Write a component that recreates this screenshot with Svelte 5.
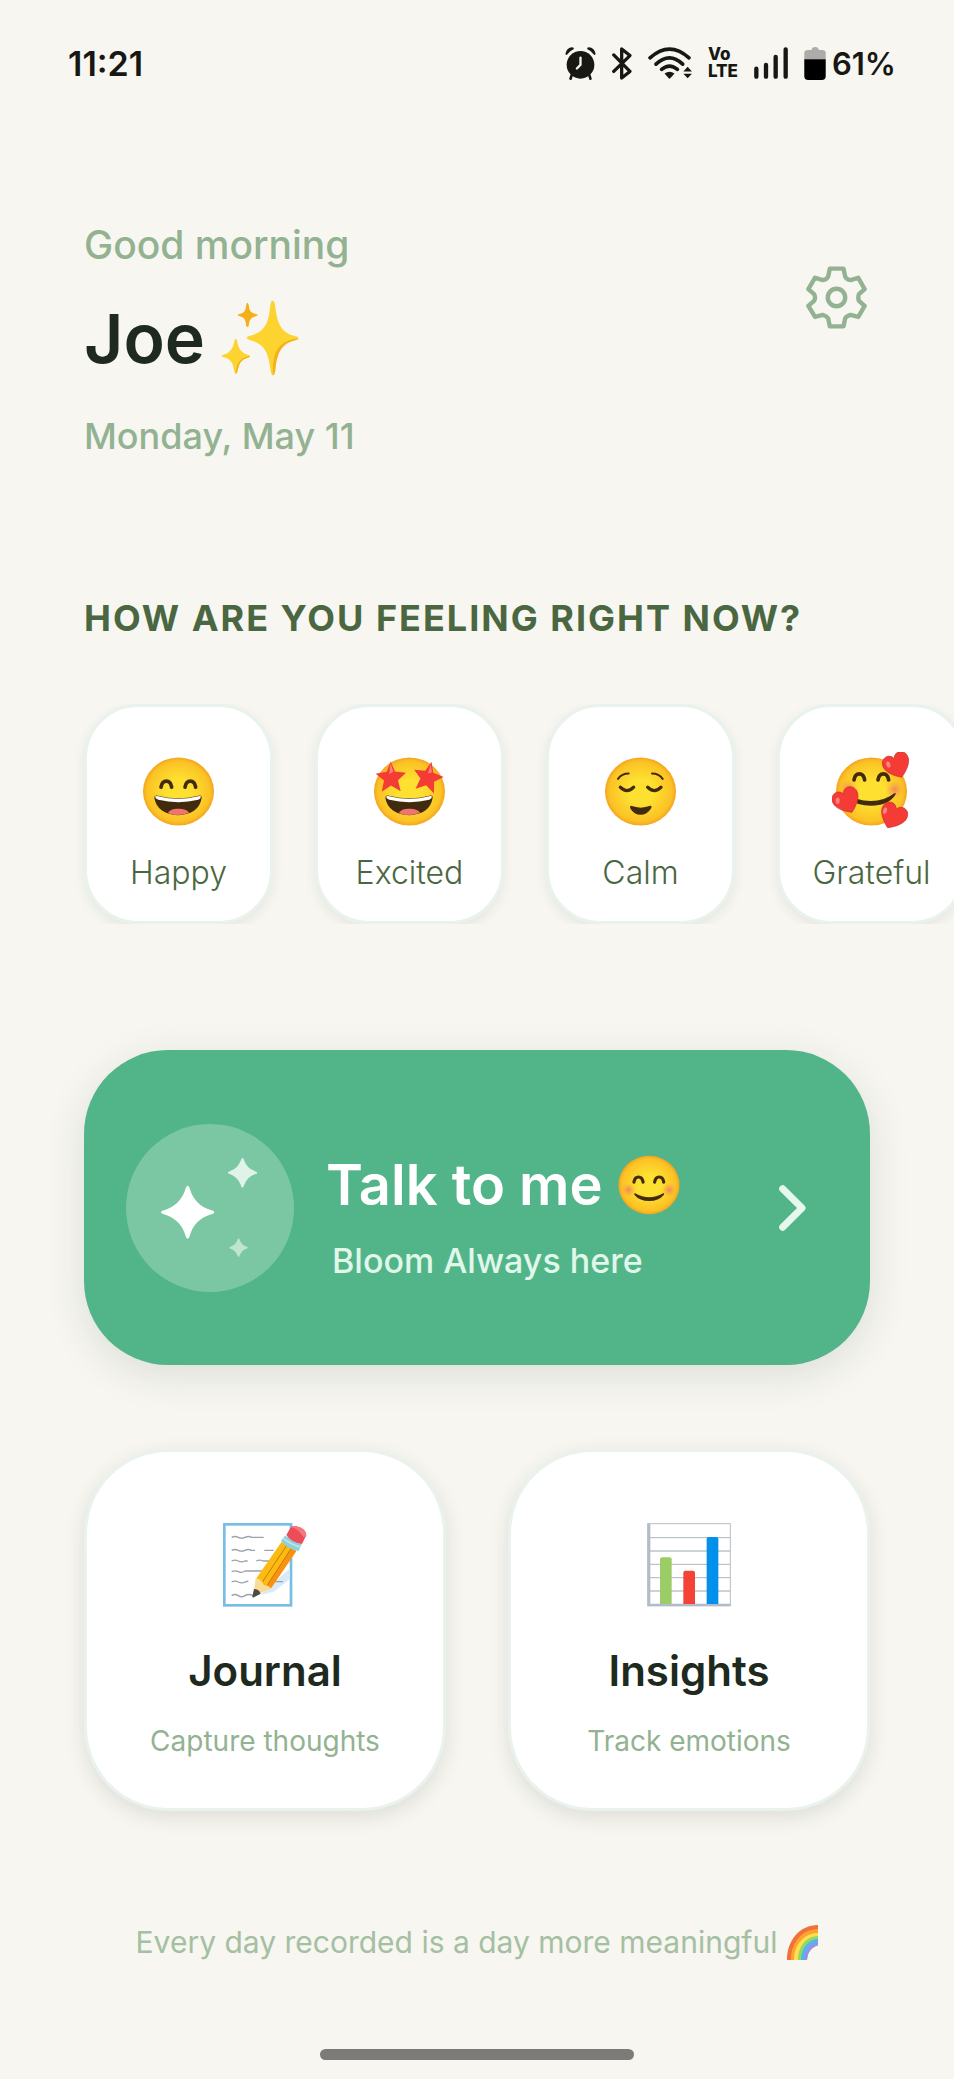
<script>
  const moods = [
    { name: 'Happy', face: 'happy' },
    { name: 'Excited', face: 'excited' },
    { name: 'Calm', face: 'calm' },
    { name: 'Grateful', face: 'grateful' }
  ]
  const star = 'M0 -46 L13 -16 L46 -12 L22 10 L30 43 L1 26 L-27 45 L-20 11 L-45 -9 L-12 -15Z'
  const heart = 'M0 38 C-22 24 -40 6 -40 -12 C-40 -28 -29 -36 -19 -36 C-9 -36 -2 -29 0 -22 C2 -29 9 -36 19 -36 C29 -36 40 -28 40 -12 C40 6 22 24 0 38Z'
</script>

{#snippet openMouth()}
  <path d="M34 121 Q34 112 45 115 Q106 130 166 115 Q177 112 176 121 C172 153 145 173 105 173 C65 173 38 151 34 121Z" fill="#422b0d" />
  <path d="M36 118 Q38 114 46 116 Q106 131 166 116 Q173 114 174 118 Q173 124 166 127 Q106 141 46 127 Q37 124 36 118Z" fill="#fff" />
  <path d="M75 167 C80 150 130 150 138 166 Q106 179 75 167Z" fill="#ef7472" />
{/snippet}

{#snippet arcs(y)}
  <g fill="none" stroke="#422b0d" stroke-width="11" stroke-linecap="round">
    <path d="M0 20 C4 -4 28 -4 32 20" transform="translate(54 {y})" />
    <path d="M0 20 C4 -4 28 -4 32 20" transform="translate(126 {y})" />
  </g>
{/snippet}

{#snippet face(kind)}
  <svg class="face" viewBox="-12 -16 237 236" aria-hidden="true">
    <defs>
      <radialGradient id="skin-{kind}" cx="50%" cy="50%" r="52%">
        <stop offset="0.35" stop-color="#fde030" />
        <stop offset="0.85" stop-color="#fbc225" />
        <stop offset="1" stop-color="#f19a1c" />
      </radialGradient>
      <radialGradient id="cheek-{kind}">
        <stop offset="0" stop-color="#f2875a" />
        <stop offset="1" stop-color="#f9a84a" stop-opacity="0" />
      </radialGradient>
    </defs>
    <ellipse cx="106.5" cy="102" rx="106.5" ry="102" fill="url(#skin-{kind})" />
    {#if kind == 'happy'}
      {@render arcs(69)}
      {@render openMouth()}
    {:else if kind == 'excited'}
      {@render openMouth()}
      <path d={star} transform="translate(50 58)" fill="#f43b36" />
      <path d={star} transform="translate(163 58) scale(-1 1) rotate(-12)" fill="#f43b36" />
      <path d="M49 16 L58 42 L46 50Z M170 20 L174 44 L162 48Z" fill="#ff8078" />
    {:else if kind == 'calm'}
      <g fill="none" stroke="#422b0d" stroke-linecap="round">
        <path d="M39 64 Q50 48 71 48 M141 48 Q162 48 173 64" stroke-width="6" />
        <path d="M46 89 Q66 110 86 89 M128 89 Q148 110 168 89" stroke-width="10" />
      </g>
      <path d="M78 145 Q107 156 136 145 Q142 146 138 153 Q126 172 107 172 Q87 172 76 153 Q73 146 78 145Z" fill="#422b0d" />
    {:else if kind == 'grateful'}
      <circle cx="36" cy="94" r="28" fill="url(#cheek-{kind})" />
      <circle cx="176" cy="96" r="28" fill="url(#cheek-{kind})" />
      {@render arcs(47)}
      <path d="M62 124 C108 138 148 128 174 108 Q182 104 178 112 C160 143 112 152 64 139Z" fill="#422b0d" />
      <g fill="#f43b36" stroke="#d02a2c" stroke-width="2">
        <path d={heart} transform="translate(183 24) rotate(-22)" />
        <path d={heart} transform="translate(32 130) rotate(-25)" />
        <path d={heart} transform="translate(171 176) rotate(25)" />
      </g>
      <g fill="#ff827d">
        <ellipse cx="157" cy="21" rx="6" ry="10" transform="rotate(-15 157 21)" />
        <ellipse cx="5" cy="130" rx="6" ry="10" />
        <ellipse cx="147" cy="160" rx="6" ry="10" transform="rotate(15 147 160)" />
      </g>
    {:else}
      <circle cx="35" cy="119" r="25" fill="url(#cheek-{kind})" />
      <circle cx="177" cy="119" r="25" fill="url(#cheek-{kind})" />
      {@render arcs(72)}
      <path d="M58 131 Q107 158 156 131 Q162 129 158 137 Q140 158 107 158 Q74 158 56 137 Q53 130 58 131Z" fill="#422b0d" />
    {/if}
  </svg>
{/snippet}

<div class="screen">
  <div class="status">
    <span class="clock">11:21</span>
    <div class="tray">
      <svg width="31" height="33" viewBox="76 46 94 100" aria-hidden="true">
        <circle cx="123" cy="100" r="42" fill="#171714" />
        <path d="M96 132 L93 142 M150 132 L153 142" stroke="#171714" stroke-width="8" stroke-linecap="round" />
        <path d="M77 68 Q80 48 98 47 Q103 48 103 52 Q89 58 81 70Z M169 68 Q166 48 148 47 Q143 48 143 52 Q157 58 165 70Z" fill="#171714" />
        <path d="M123 78 V100 L112 111" fill="none" stroke="#f7f6f1" stroke-width="7" stroke-linecap="round" />
      </svg>
      <svg width="20" height="33" viewBox="218 46 60 100" aria-hidden="true">
        <path d="M223 70 L272 120 L247 140 V52 L272 72 L223 120" fill="none" stroke="#171714" stroke-width="10" stroke-linejoin="round" stroke-linecap="round" />
      </svg>
      <svg width="44" height="33" viewBox="321 46 133 100" aria-hidden="true">
        <g fill="none" stroke="#171714" stroke-width="11" stroke-linecap="round">
          <path d="M327 79 Q386 26 445 79" />
          <path d="M345 98 Q386 60 426 98" />
          <path d="M362 114 Q386 94 410 114" />
        </g>
        <path d="M371 126 Q386 116 401 126 Q386 144 385 142Z M428 120 L441 106 L454 120Z M428 127 L441 141 L454 127Z" fill="#171714" />
      </svg>
      <span class="volte">Vo<br />LTE</span>
      <svg class="bars" width="34" height="32" viewBox="642 50 102 94" aria-hidden="true">
        <path d="M649 114 V138 M678 103 V138 M707 79 V138 M737 56 V138" stroke="#171714" stroke-width="13" stroke-linecap="round" />
      </svg>
      <svg width="22" height="33" viewBox="795 44 65 100" aria-hidden="true">
        <path d="M795 82 V62 Q795 53 806 53 H817 Q818 44 828 44 Q838 44 839 53 H850 Q860 53 860 62 V82Z" fill="#adaca8" />
        <path d="M795 81 H860 V132 Q860 144 848 144 H807 Q795 144 795 132Z" fill="#000" />
      </svg>
      <span class="percent">61%</span>
    </div>
  </div>

  <main>
    <header>
      <div>
        <p class="greeting">Good morning</p>
        <h1>
          Joe
          <svg width="78" height="76" viewBox="466 274 233 227" aria-hidden="true">
            <g fill="#fdd32f">
              <path d="M620 276 Q626 276 628 292 C634 350 650 372 684 381 Q697 384 697 388 Q697 392 684 395 C650 405 634 425 628 484 Q626 499 621 499 Q616 499 614 484 C608 425 592 405 556 395 Q543 391 543 387 Q543 383 556 380 C592 370 608 350 613 292 Q615 276 620 276Z" />
              <path d="M510 390 Q514 391 515 402 Q520 430 543 437 Q553 439 553 442 Q553 445 543 447 Q521 453 516 482 Q514 494 510 494 Q507 494 505 482 Q500 452 478 446 Q468 443 468 441 Q468 438 478 436 Q499 430 505 402 Q507 391 510 390Z" />
            </g>
            <path d="M697 388 Q697 392 684 395 C650 405 634 425 628 484 Q626 499 621 499 C620 440 627 397 697 388Z M553 442 Q553 445 543 447 Q521 453 516 482 Q514 494 510 494 Q511 446 553 442Z" fill="#f3b21c" />
            <path d="M545 282 Q549 283 550 298 Q552 312 568 315 Q576 317 576 319 Q576 322 568 323 Q553 326 550 342 Q549 355 545 355 Q541 355 540 342 Q538 326 524 323 Q516 321 516 319 Q516 316 524 315 Q538 312 540 298 Q541 283 545 282Z" fill="#f4b01b" />
          </svg>
        </h1>
        <p class="date">Monday, May 11</p>
      </div>
      <button class="settings" aria-label="Settings">
        <svg width="61" height="63" viewBox="77 76 182 188" aria-hidden="true">
          <g fill="none" stroke="#92b291" stroke-width="13" stroke-linejoin="round">
            <path d="M148 84 H189 L194 108 Q198 117 210 118 L233 111 L252 145 L235 160 Q231 170 235 180 L252 195 L233 228 L210 222 Q198 225 194 232 L189 256 H148 L143 232 Q138 225 127 222 L104 228 L84 195 L101 180 Q107 170 101 160 L84 145 L104 111 L127 118 Q138 117 143 108Z" />
            <circle cx="168" cy="170" r="26" />
          </g>
        </svg>
      </button>
    </header>

    <h2>HOW ARE YOU FEELING RIGHT NOW?</h2>
    <div class="moods">
      {#each moods as mood}
        <button class="mood">
          {@render face(mood.face)}
          <span>{mood.name}</span>
        </button>
      {/each}
    </div>

    <button class="talk">
      <svg class="orb" viewBox="168 280 504 504" aria-hidden="true">
        <circle cx="420" cy="532" r="252" fill="#7bc7a3" />
        <path d="M353 465 Q357 465 359 473 C369 508 389 528 424 539 Q433 541 433 545 Q433 549 424 551 C389 562 369 582 359 616 Q357 624 353 624 Q349 624 347 616 C337 582 316 562 282 551 Q273 549 273 545 Q273 541 282 539 C316 528 337 508 347 473 Q349 465 353 465Z" fill="#fff" />
        <path d="M517 381 Q521 382 523 390 Q531 413 554 421 Q562 424 562 426 Q562 429 554 431 Q531 440 523 462 Q520 471 517 471 Q514 471 512 462 Q503 440 481 431 Q474 429 474 426 Q474 423 481 421 Q503 413 512 390 Q515 382 517 381Z" fill="#e0f3e9" />
        <path d="M506 622 Q508 623 509 628 Q515 643 529 648 Q534 650 534 651 Q534 652 529 654 Q515 659 509 674 Q508 679 506 679 Q504 679 502 674 Q497 659 482 654 Q477 652 477 651 Q477 650 482 648 Q497 643 502 628 Q504 623 506 622Z" fill="#bfe4d0" />
      </svg>
      <span class="talk-text">
        <span class="talk-title">Talk to me {@render face('smile')}</span>
        <span class="talk-sub">Bloom Always here</span>
      </span>
      <svg width="27" height="46" viewBox="894 463 81 138" aria-hidden="true">
        <path d="M905 474 L963 532 L905 590" fill="none" stroke="#e6f7ed" stroke-width="21" stroke-linecap="round" stroke-linejoin="round" />
      </svg>
    </button>

    <div class="tiles">
      <button class="tile">
        <svg width="84" height="84" viewBox="458 284 252 252" aria-hidden="true">
          <rect x="462" y="288" width="200" height="243" fill="#fff" stroke="#77bde4" stroke-width="8" />
          <path d="M659 420 V452 L610 490 L570 500Z" fill="#d8e9f8" />
          <path d="M484 327 q10 -5 20 0 t20 0 t20 0 h36 M484 366 q10 -5 20 0 t20 0 t20 0 h10 M582 366 h28 M484 398 q10 -5 20 0 t20 0 h8 M558 398 q10 -5 20 0 h20 M484 430 q10 -5 20 0 t20 -2 h60 M484 461 q10 -5 20 0 t20 0 l10 -3 M612 460 h26 M484 502 q10 -7 20 0 t20 0 t25 0" fill="none" stroke="#9aa3a9" stroke-width="4" />
          <path d="M634 340 L678 368 L602 480 L586 478 L577 468 L563 462 L558 450Z" fill="#fdbb12" />
          <path d="M664 359 L678 368 L602 480 L590 470Z" fill="#fb9110" />
          <path d="M650 350 L577 460 M664 358 L590 472" stroke="#c67a12" stroke-width="3" />
          <path d="M556 450 Q574 452 580 470 Q592 470 602 480 L566 497 L551 484Z" fill="#fbdc94" />
          <path d="M551 482 Q566 482 571 496 L548 508 Q545 506 547 500Z" fill="#4c4a4b" />
          <path d="M644 322 L694 347 L685 368 Q650 362 632 337Z" fill="#8fd0dc" />
          <path d="M639 330 Q660 348 690 356" fill="none" stroke="#bde6ec" stroke-width="5" />
          <path d="M648 320 L660 299 Q665 291 678 294 Q707 300 708 321 L695 347 Q661 341 648 320Z" fill="#ec4d56" />
          <path d="M663 297 Q682 300 699 326 Q707 326 708 320 Q706 300 678 294 Q668 291 663 297Z" fill="#f47780" />
        </svg>
        <span class="tile-title">Journal</span>
        <span class="tile-sub">Capture thoughts</span>
      </button>
      <button class="tile">
        <svg width="84" height="84" viewBox="471 276 252 252" aria-hidden="true">
          <rect x="473" y="278" width="248" height="246" fill="#fff" stroke="#b8bec5" stroke-width="3" />
          <path d="M480 320 H721 M480 360 H721 M480 400 H721 M480 440 H721 M480 480 H721" stroke="#bdc3c8" stroke-width="4" />
          <path d="M477 278 V522 H722" fill="none" stroke="#b0bccb" stroke-width="8" />
          <path d="M510 519 V385 Q510 379 516 379 H539 Q545 379 545 385 V519Z" fill="#9ccc65" />
          <path d="M580 519 V425 Q580 419 586 419 H609 Q615 419 615 425 V519Z" fill="#f44336" />
          <path d="M650 519 V323 Q650 318 656 318 H679 Q685 318 685 323 V519Z" fill="#0290ea" />
        </svg>
        <span class="tile-title">Insights</span>
        <span class="tile-sub">Track emotions</span>
      </button>
    </div>

    <p class="footnote">
      Every day recorded is a day more meaningful
      <svg width="31" height="35" viewBox="0 0 31 35" aria-hidden="true">
        <path d="M0 35 C0 15 13 0 31 0 V20 C25 22 20 27 20 35Z" fill="#f2703c" />
        <path d="M4 35 C4 18 15 4 31 4 V20 C25 22 20 27 20 35Z" fill="#fba431" />
        <path d="M7 35 C7 20 17 8 31 8 V20 C25 22 20 27 20 35Z" fill="#fde14b" />
        <path d="M11 35 C11 22 19 11 31 11 V20 C25 22 20 27 20 35Z" fill="#9ad36a" />
        <path d="M14 35 C14 24 21 14 31 14 V20 C25 22 20 27 20 35Z" fill="#45bfe0" />
        <path d="M17 35 C17 26 23 17 31 17 V20 C25 22 20 27 20 35Z" fill="#9a8cf5" />
      </svg>
    </p>
  </main>

  <div class="home-bar"></div>
</div>

<style>
  :global(body) {
    background: #f7f6f1;
  }

  .screen {
    min-height: 100vh;
    box-sizing: border-box;
    padding-bottom: 19px;
    display: flex;
    flex-direction: column;
    overflow: hidden;
    font-family: Inter, "Liberation Sans", sans-serif;
    color: #1e2a20;
  }

  .status {
    height: 126px;
    padding: 0 58px 0 68px;
    display: flex;
    align-items: center;
    justify-content: space-between;
    color: #171714;
    font-weight: 600;
  }

  .clock {
    font-size: 34px;
  }

  .tray {
    display: flex;
    align-items: center;
    gap: 16px;
  }

  .volte {
    font-size: 17px;
    line-height: 17px;
    font-weight: 800;
  }

  .percent {
    margin-left: -10px;
    font-size: 31px;
  }

  main {
    flex: 1;
    padding: 95px 84px 0;
  }

  header {
    display: flex;
    align-items: flex-start;
    justify-content: space-between;
    margin-bottom: 134px;
  }

  p, h1, h2 {
    margin: 0;
  }

  .greeting, .date {
    font-size: 39px;
    line-height: 48px;
    font-weight: 500;
    color: #92b291;
  }

  .date {
    font-size: 36px;
  }

  h1 {
    margin: 25px 0 30px;
    display: flex;
    align-items: center;
    gap: 16px;
    font-size: 68px;
    line-height: 88px;
    font-weight: 600;
  }

  button {
    font: inherit;
    color: inherit;
    border: 0;
    padding: 0;
    background: none;
    cursor: pointer;
  }

  svg {
    display: block;
    flex-shrink: 0;
  }

  .settings {
    margin-top: 45px;
    margin-right: 3px;
  }

  h2 {
    font-size: 36px;
    line-height: 48px;
    font-weight: 700;
    letter-spacing: 2px;
    white-space: nowrap;
    color: #4a6741;
  }

  .moods {
    margin: 62px -84px 126px -20px;
    padding-left: 20px;
    display: flex;
    gap: 42px;
    overflow: hidden;
  }

  .mood {
    flex: 0 0 189px;
    height: 220px;
    box-sizing: border-box;
    border: 3px solid #e9f2ec;
    border-radius: 54px;
    background: #fff;
    box-shadow: 0 4px 12px rgba(40, 50, 40, 0.08);
    display: flex;
    flex-direction: column;
    align-items: center;
    padding-top: 45px;
    font-size: 32px;
    line-height: 40px;
    font-weight: 300;
    color: #4a6741;
  }

  .face {
    width: 79px;
    height: 79px;
  }

  .mood span {
    margin-top: 22px;
  }

  .talk {
    width: 100%;
    height: 315px;
    padding: 0 64px 0 42px;
    border-radius: 84px;
    background: #52b58a;
    box-shadow: 0 10px 40px rgba(40, 60, 40, 0.12);
    display: flex;
    align-items: center;
    text-align: left;
  }

  .orb {
    width: 168px;
    height: 168px;
  }

  .talk-text {
    flex: 1;
    padding: 18px 0 0 32px;
    display: flex;
    flex-direction: column;
    gap: 16px;
  }

  .talk-title {
    display: flex;
    align-items: center;
    gap: 12px;
    font-size: 56px;
    line-height: 72px;
    font-weight: 600;
    color: #fff;
    white-space: nowrap;
  }

  .talk-title .face {
    width: 68px;
    height: 68px;
  }

  .talk-sub {
    padding-left: 6px;
    font-size: 34px;
    line-height: 48px;
    font-weight: 500;
    color: #e0f7e9;
  }

  .tiles {
    margin: 84px 0 107px;
    display: grid;
    grid-template-columns: 1fr 1fr;
    gap: 62px;
  }

  .tile {
    height: 362px;
    box-sizing: border-box;
    padding-top: 71px;
    border: 3px solid #e9f2ec;
    border-radius: 84px;
    background: #fff;
    box-shadow: 0 6px 20px rgba(40, 50, 40, 0.12);
    display: flex;
    flex-direction: column;
    align-items: center;
  }

  .tile-title {
    margin-top: 36px;
    font-size: 42px;
    line-height: 56px;
    font-weight: 600;
  }

  .tile-sub {
    margin-top: 22px;
    font-size: 28px;
    line-height: 40px;
    color: #92b291;
  }

  .footnote {
    display: flex;
    align-items: center;
    justify-content: center;
    gap: 10px;
    font-size: 30px;
    line-height: 48px;
    white-space: nowrap;
    color: #a5bfa2;
  }

  .home-bar {
    width: 33%;
    height: 11px;
    margin: 0 auto;
    border-radius: 6px;
    background: #7d7b77;
  }
</style>
